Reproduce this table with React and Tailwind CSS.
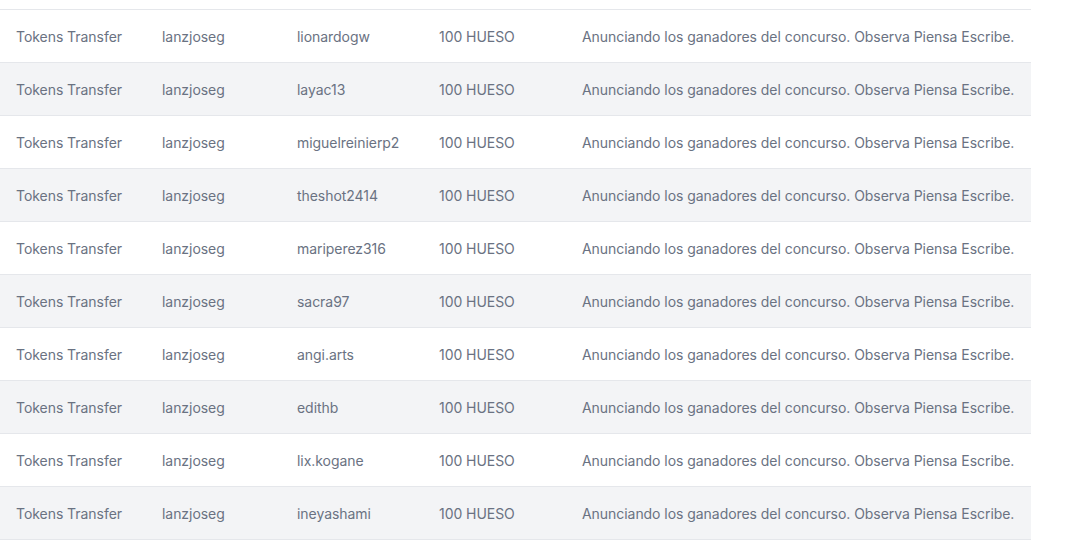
const names = ["lionardogw","layac13","miguelreinierp2","theshot2414","mariperez316","sacra97","angi.arts","edithb","lix.kogane","ineyashami"];

export default function App() {
  return (
    <div className="w-[1075px] h-[551px] bg-white pt-[9px]" style={{fontFamily: "Inter, 'Liberation Sans', sans-serif"}}>
      <table className="w-[1031px] table-fixed border-collapse border-t border-gray-200 text-sm text-gray-500 tracking-[-0.05px]">
        <colgroup>
          <col className="w-[146px]" />
          <col className="w-[135px]" />
          <col className="w-[142px]" />
          <col className="w-[143px]" />
          <col className="w-[465px]" />
        </colgroup>
        <tbody>
          {names.map((n, i) => (
            <tr key={n} className={`h-[53px] border-b border-gray-200 ${i % 2 === 1 ? "bg-gray-100" : "bg-white"}`}>
              <td className="px-4 pt-[2px] whitespace-nowrap">Tokens Transfer</td>
              <td className="px-4 pt-[2px] whitespace-nowrap">lanzjoseg</td>
              <td className="px-4 pt-[2px] whitespace-nowrap">{n}</td>
              <td className="px-4 pt-[2px] whitespace-nowrap">100 HUESO</td>
              <td className="px-4 pt-[2px] whitespace-nowrap">Anunciando los ganadores del concurso. Observa Piensa Escribe.</td>
            </tr>
          ))}
        </tbody>
      </table>
    </div>
  );
}
